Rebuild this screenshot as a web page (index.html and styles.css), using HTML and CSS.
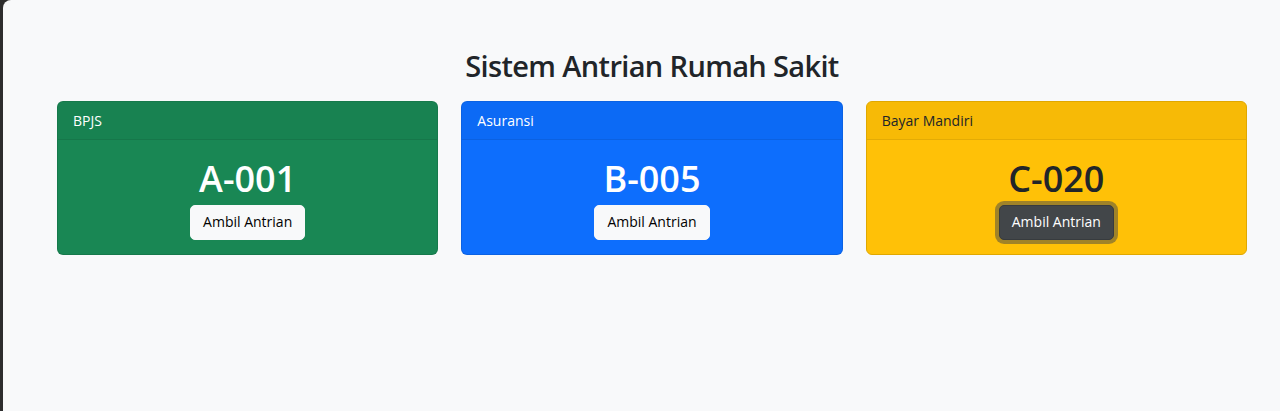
FILE: index.html
```html
<!DOCTYPE html>
<html lang="id">
<head>
<meta charset="utf-8">
<title>Sistem Antrian Rumah Sakit</title>
<link rel="stylesheet" href="styles.css">
</head>
<body>
<div class="window">
  <main class="page">
    <h2 class="title">Sistem Antrian Rumah Sakit</h2>
    <div class="cards">
      <section class="card card-green">
        <div class="card-header">BPJS</div>
        <div class="card-body">
          <h1 class="number">A-001</h1>
          <button class="btn btn-light" type="button">Ambil Antrian</button>
        </div>
      </section>
      <section class="card card-blue">
        <div class="card-header">Asuransi</div>
        <div class="card-body">
          <h1 class="number">B-005</h1>
          <button class="btn btn-light" type="button">Ambil Antrian</button>
        </div>
      </section>
      <section class="card card-yellow">
        <div class="card-header">Bayar Mandiri</div>
        <div class="card-body">
          <h1 class="number">C-020</h1>
          <button class="btn btn-dark btn-focus" type="button">Ambil Antrian</button>
        </div>
      </section>
    </div>
  </main>
</div>
</body>
</html>
```

FILE: styles.css
```css
* { box-sizing: border-box; }
html, body { margin: 0; padding: 0; height: 100%; }
body {
  background: #2d2d2d;
  font-family: "Open Sans", "Noto Sans", sans-serif;
  color: #212529;
}
.window {
  height: 100%;
  padding-left: 3px;
}
.page {
  height: 100%;
  background: #f8f9fa;
  border-top-left-radius: 8px;
  padding: 48px 33px 0 54px;
}
.title {
  margin: 0 0 17px;
  text-align: center;
  font-size: 29px;
  font-weight: 600;
  letter-spacing: -0.65px;
  line-height: 36px;
  color: #212529;
}
.cards {
  display: flex;
  gap: 23px;
}
.card {
  flex: 1 1 0;
  border-radius: 6px;
  overflow: hidden;
  border: 1px solid rgba(0,0,0,0.1);
  display: flex;
  flex-direction: column;
}
.card-green { background: #198754; color: #fff; }
.card-blue { background: #0d6efd; color: #fff; }
.card-yellow { background: #ffc107; color: #212529; border-color: #e0a800; }
.card-header {
  padding: 8px 15px 7px;
  font-size: 14px;
  line-height: 22px;
  background: rgba(0,0,0,0.03);
  border-bottom: 1px solid rgba(0,0,0,0.08);
}
.card-body {
  padding: 15px 16px 14px;
  text-align: center;
}
.number {
  margin: 0 0 2px;
  font-size: 36px;
  font-weight: 600;
  line-height: 48px;
}
.btn {
  font-family: inherit;
  font-size: 14px;
  line-height: 22px;
  padding: 5px 12px 6px;
  border-radius: 5px;
  border: 1px solid transparent;
  cursor: pointer;
}
.btn-light { background: #f8f9fa; color: #000; border-color: #f8f9fa; }
.btn-dark { background: #424649; color: #fff; border-color: #373b3e; }
.btn-focus { box-shadow: 0 0 0 4px rgba(66,70,73,0.5); }
```
